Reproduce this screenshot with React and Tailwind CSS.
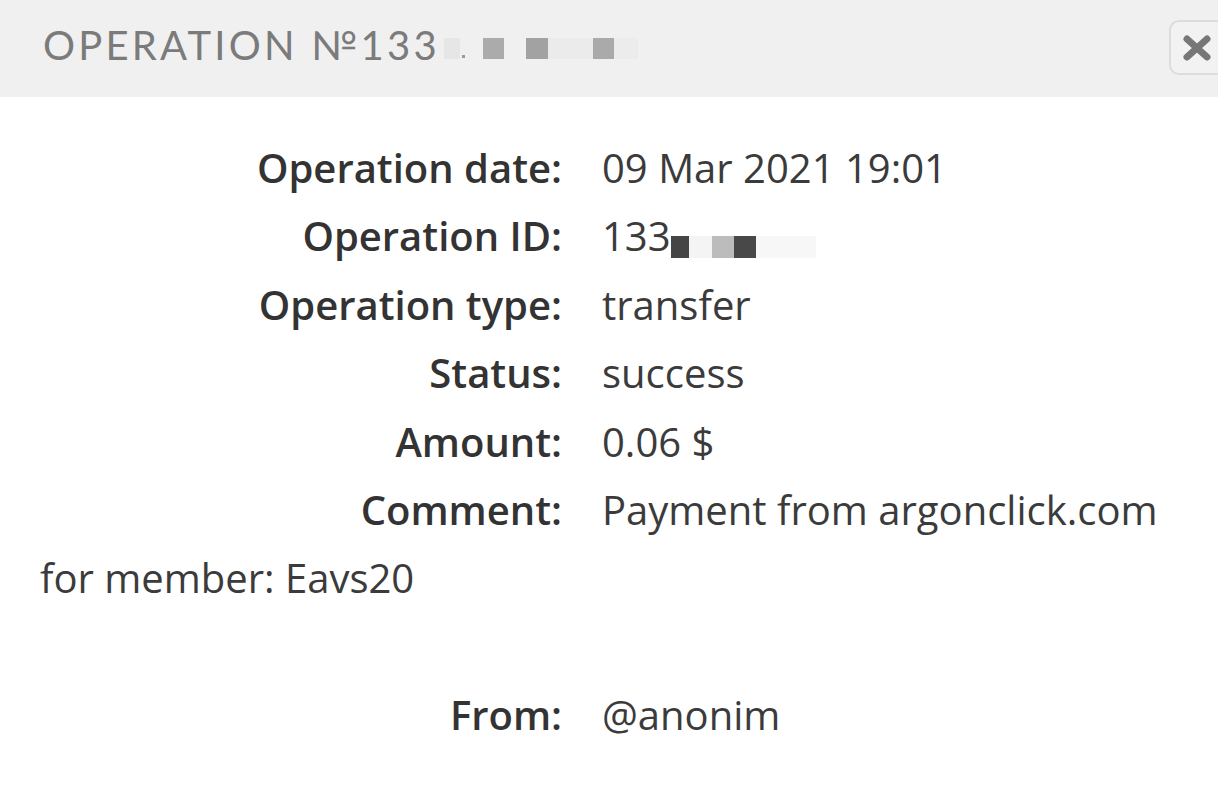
export default function App() {
  const body = { fontFamily: '"Open Sans", "Liberation Sans", sans-serif' };
  const title = { fontFamily: 'Lato, "Open Sans", sans-serif' };
  const rows = [
    ["Operation date:", "09 Mar 2021 19:01"],
    ["Operation ID:", null],
    ["Operation type:", "transfer"],
    ["Status:", "success"],
    ["Amount:", "0.06 $"],
  ];
  return (
    <div className="w-[1218px] h-[801px] bg-white overflow-hidden" style={body}>
      <div className="h-[97px] bg-[#f0f0f0] flex items-center justify-between pl-[43px] overflow-hidden">
        <div className="flex items-end text-[40px] leading-none text-[#7b7b7b] tracking-[0.08em] mb-[8px]" style={title}>
          <span>OPERATION №133</span>
          <span className="inline-flex items-end h-[21px] mb-[6px] ml-[4px]">
            <span className="w-[16px] h-[21px] bg-[#e6e6e6]" />
            <span className="w-[3px] h-[3px] bg-[#9a9a9a] mb-[1px] ml-[2px]" />
            <span className="w-[21px] h-[21px] bg-[#ababab] ml-[18px]" />
            <span className="w-[22px] h-[21px] bg-[#a2a2a2] ml-[22px]" />
            <span className="w-[45px] h-[21px] bg-[#ebebeb] ml-0" />
            <span className="w-[21px] h-[21px] bg-[#aaaaaa]" />
            <span className="w-[24px] h-[21px] bg-[#ececec]" />
          </span>
        </div>
        <button className="w-[57px] h-[55px] -mr-[8px] mt-[-2px] rounded-[10px] border-2 border-[#dcdcdc] bg-[#f2f2f2] flex items-center pl-[12px]">
          <svg width="28" height="26" viewBox="0 0 28 26">
            <path d="M4 4 L24 22 M24 4 L4 22" stroke="#777" strokeWidth="7" strokeLinecap="round" />
          </svg>
        </button>
      </div>
      <div className="pl-[40px] pt-[37px] text-[40px] leading-[68.4px] text-[#3b3b3b]">
        {rows.map(([label, value]) => (
          <div key={label}>
            <span className="inline-block w-[522px] text-right font-semibold text-[#333] mr-[40px]">{label}</span>
            {value !== null ? (
              <span>{value}</span>
            ) : (
              <span>
                133
                <span className="inline-block w-[18px] h-[22px] bg-[#454545] align-[-7px]" />
                <span className="inline-block w-[23px] h-[22px] bg-[#f4f4f4] align-[-7px]" />
                <span className="inline-block w-[22px] h-[22px] bg-[#bcbcbc] align-[-7px]" />
                <span className="inline-block w-[22px] h-[22px] bg-[#484848] align-[-7px]" />
                <span className="inline-block w-[60px] h-[22px] bg-[#f7f7f7] align-[-7px]" />
              </span>
            )}
          </div>
        ))}
        <div>
          <span className="inline-block w-[522px] text-right font-semibold text-[#333] mr-[40px]">Comment:</span>
          <span>Payment from argonclick.com</span>
          <br />
          <span>for member: Eavs20</span>
          <br />
          <span>&nbsp;</span>
        </div>
        <div>
          <span className="inline-block w-[522px] text-right font-semibold text-[#333] mr-[40px]">From:</span>
          <span>@anonim</span>
        </div>
      </div>
    </div>
  );
}
